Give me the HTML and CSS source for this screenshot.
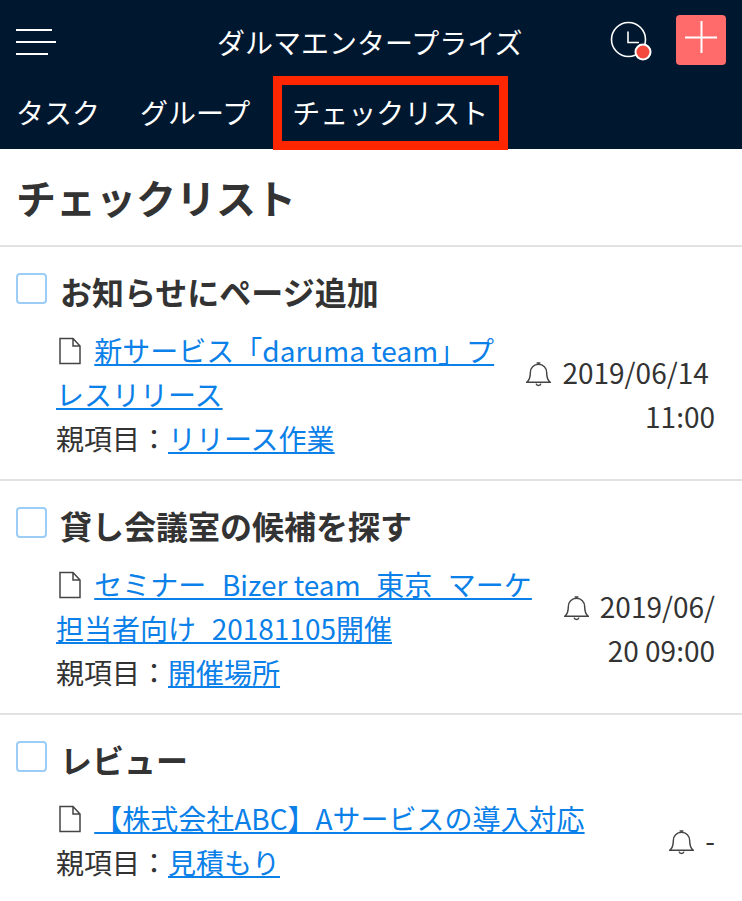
FILE: index.html
```html
<!DOCTYPE html>
<html lang="ja">

<head>
    <meta charset="UTF-8">
    <meta name="viewport" content="width=device-width, initial-scale=1.0">
    <title>チェックリスト</title>

    <link rel="stylesheet" href="styles.css">
</head>

<body>

    <header class="header">
        <div class="topbar">
            <button class="menu" aria-label="menu">
                <span class="menu-line line1"></span>
                <span class="menu-line line2"></span>
                <span class="menu-line line3"></span>
            </button>
            <div class="team">ダルマエンタープライズ</div>
            <svg class="clock" width="44" height="44" viewBox="0 0 44 44" fill="none">
                <circle cx="18.5" cy="18.5" r="17" stroke="#fff" stroke-width="1.6" />
                <path d="M18 10.500V21.500H29" stroke="#fff" stroke-width="1.6" />
                <circle cx="33" cy="31" r="7.500" fill="#f44a3e" stroke="#fff" stroke-width="2" />
            </svg>
            <button class="add" aria-label="add">
                <svg width="50" height="50" viewBox="0 0 50 50" fill="none">
                    <path d="M9 22.500H41M25.500 6V38" stroke="#fff" stroke-width="2" />
                </svg>
            </button>
        </div>
        <nav class="tabs">
            <a class="tab">タスク</a>
            <a class="tab">グループ</a>
            <a class="tab marked">チェックリスト</a>
        </nav>
    </header>

    <h1 class="page-title">チェックリスト</h1>

    <section class="item">
        <div class="item-head">
            <span class="check"></span>
            <h2 class="item-title">お知らせにページ追加</h2>
        </div>
        <div class="item-body">
            <div class="item-main">
                <div>
                    <svg class="doc" width="22" height="28" viewBox="0 0 22 28" fill="none">
                        <path d="M1 1.500H14L21 9V26.500H1ZM14 1.500V9H21" stroke="#444" stroke-width="1.500" />
                    </svg>
                    <a class="link">新サービス「daruma team」プレスリリース</a>
                </div>
                <div>親項目：<a class="link">リリース作業</a></div>
            </div>
            <div class="item-meta">
                <svg class="bell" width="25" height="26" viewBox="0 0 26 26" fill="none">
                    <path d="M1 21.500C4 19 4.500 16 4.500 11.500C4.500 6.500 8 3 13 3C18 3 21.500 6.500 21.500 11.500C21.500 16 22 19 25 21.500ZM11 1.500H15M10.500 23C11 25.500 15 25.500 15.500 23" stroke="#444" stroke-width="1.500" />
                </svg>2019/06/14&nbsp;<br>11:00
            </div>
        </div>
    </section>

    <section class="item">
        <div class="item-head">
            <span class="check"></span>
            <h2 class="item-title">貸し会議室の候補を探す</h2>
        </div>
        <div class="item-body">
            <div class="item-main">
                <div>
                    <svg class="doc" width="22" height="28" viewBox="0 0 22 28" fill="none">
                        <path d="M1 1.500H14L21 9V26.500H1ZM14 1.500V9H21" stroke="#444" stroke-width="1.500" />
                    </svg>
                    <a class="link">セミナー_Bizer team_東京_マーケ担当者向け_20181105開催</a>
                </div>
                <div>親項目：<a class="link">開催場所</a></div>
            </div>
            <div class="item-meta">
                <svg class="bell" width="25" height="26" viewBox="0 0 26 26" fill="none">
                    <path d="M1 21.500C4 19 4.500 16 4.500 11.500C4.500 6.500 8 3 13 3C18 3 21.500 6.500 21.500 11.500C21.500 16 22 19 25 21.500ZM11 1.500H15M10.500 23C11 25.500 15 25.500 15.500 23" stroke="#444" stroke-width="1.500" />
                </svg>2019/06/<br>20 09:00
            </div>
        </div>
    </section>

    <section class="item">
        <div class="item-head">
            <span class="check"></span>
            <h2 class="item-title">レビュー</h2>
        </div>
        <div class="item-body">
            <div class="item-main">
                <div>
                    <svg class="doc" width="22" height="28" viewBox="0 0 22 28" fill="none">
                        <path d="M1 1.500H14L21 9V26.500H1ZM14 1.500V9H21" stroke="#444" stroke-width="1.500" />
                    </svg>
                    <a class="link">【株式会社ABC】Aサービスの導入対応</a>
                </div>
                <div>親項目：<a class="link">見積もり</a></div>
            </div>
            <div class="item-meta">
                <svg class="bell" width="25" height="26" viewBox="0 0 26 26" fill="none">
                    <path d="M1 21.500C4 19 4.500 16 4.500 11.500C4.500 6.500 8 3 13 3C18 3 21.500 6.500 21.500 11.500C21.500 16 22 19 25 21.500ZM11 1.500H15M10.500 23C11 25.500 15 25.500 15.500 23" stroke="#444" stroke-width="1.500" />
                </svg>-
            </div>
        </div>
    </section>

</body>

</html>
```

FILE: styles.css
```css
html,
body {
    margin: 0;
    background: #fff;
    color: #333;
    font-family: "Noto Sans CJK JP", "Noto Sans", sans-serif;
}

button {
    padding: 0;
    border: 0;
    background: none;
}

.header {
    height: 149px;
    background: #00182f;
    color: #fff;
}

.topbar {
    height: 76px;
    padding: 15px 16px 0;
    box-sizing: border-box;
    display: flex;
    align-items: flex-start;
}

.menu {
    width: 40px;
    margin-top: 14px;
    display: flex;
    flex-direction: column;
    gap: 10px;
}

.menu-line {
    display: block;
    height: 2px;
    background: #fff;
}

.line1 {
    width: 36px;
}

.line2 {
    width: 40px;
}

.line3 {
    width: 32px;
}

.team {
    margin-left: 161px;
    font-size: 28px;
    line-height: 54px;
    white-space: nowrap;
}

.clock {
    margin-left: auto;
    margin-top: 6px;
}

.add {
    width: 50px;
    height: 50px;
    margin-left: 22px;
    background: #ff6b6b;
    border-radius: 4px;
}

.add svg {
    display: block;
}

.tabs {
    height: 73px;
    padding-left: 16px;
    display: flex;
    gap: 40px;
    font-size: 28px;
    line-height: 72px;
}

.tab {
    position: relative;
}

.tab.marked {
    margin-left: 2px;
}

.tab.marked::after {
    content: "";
    position: absolute;
    top: 0;
    bottom: -1px;
    left: -19px;
    right: -20px;
    border: 9px solid #ff2600;
}

.page-title {
    margin: 0;
    height: 96px;
    padding-left: 16px;
    font-size: 40px;
    font-weight: 700;
    line-height: 96px;
    border-bottom: 2px solid #e2e2e2;
}

.item {
    padding: 0 27px 19px 16px;
    border-bottom: 2px solid #e2e2e2;
}

.item:last-child {
    padding-bottom: 0;
    border-bottom: 0;
}

.item-head {
    height: 81px;
    padding-top: 21px;
    box-sizing: border-box;
    display: flex;
    align-items: flex-start;
}

.check {
    width: 31px;
    height: 31px;
    box-sizing: border-box;
    border: 2px solid #9bcdf7;
    border-radius: 4px;
    margin-top: 5px;
}

.item-title {
    margin: 0 0 0 13px;
    font-size: 32px;
    font-weight: 700;
    line-height: 46px;
}

.item-body {
    padding-left: 40px;
    display: flex;
    align-items: center;
    font-size: 28px;
    line-height: 44px;
}

.item-main {
    flex: 1;
    min-width: 0;
    word-break: break-all;
}

.link {
    color: #0a80e8;
    text-decoration: underline;
}

.doc {
    vertical-align: -3px;
    margin: 0 7px 0 3px;
}

.item-meta {
    flex-shrink: 0;
    margin-left: 30px;
    text-align: right;
    white-space: nowrap;
}

.bell {
    vertical-align: -3px;
    margin-right: 11px;
}
```
